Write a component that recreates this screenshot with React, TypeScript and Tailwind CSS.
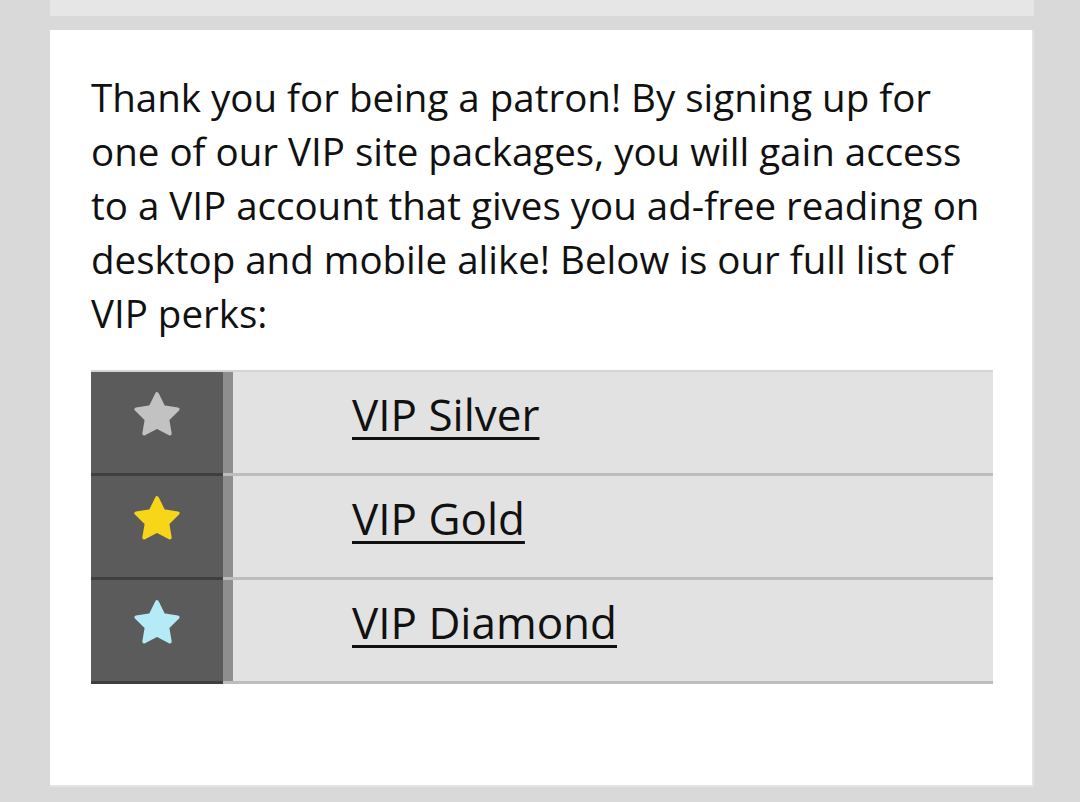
const tiers = [
  { name: "VIP Silver", color: "#c2c2c2" },
  { name: "VIP Gold", color: "#f7d518" },
  { name: "VIP Diamond", color: "#b5eaf7" },
];

function Star({ color }: { color: string }) {
  return (
    <svg width="56" height="56" viewBox="0 0 24 24">
      <path
        d="M12 2.6l2.75 5.6 6.15.9-4.45 4.35 1.05 6.1L12 16.65 6.5 19.55l1.05-6.1L3.1 9.1l6.15-.9z"
        fill={color}
        stroke={color}
        strokeWidth="1.6"
        strokeLinejoin="round"
      />
    </svg>
  );
}

export default function App() {
  return (
    <div className="min-h-[802px] bg-[#d9d9d9] px-[50px] font-['Open_Sans',sans-serif] text-black">
      <div className="h-[16px] w-[984px] bg-[#e6e6e6]"></div>
      <div className="mt-[14px] w-[984px] h-[757px] bg-white border-r-2 border-b-2 border-[#e4e4e4] px-[41px] pt-[40px]">
        <p className="text-[38.5px] leading-[54px] text-[#111]">
          Thank you for being a patron! By signing up for one of our VIP site packages, you will gain access to a VIP
          account that gives you ad-free reading on desktop and mobile alike! Below is our full list of VIP perks:
        </p>
        <div className="mt-[30px] w-[902px] border-t-2 border-[#d4d4d4]">
          {tiers.map((t) => (
            <div key={t.name} className="flex h-[104px] border-b-[3px] border-[#bdbdbd]">
              <div className="w-[132px] bg-[#5b5b5b] flex items-center justify-center pb-[14px] border-b-[3px] border-[#3f3f3f] -mb-[3px]">
                <Star color={t.color} />
              </div>
              <div className="w-[10px] bg-[#8e8e8e]"></div>
              <div className="flex-1 bg-[#e2e2e2] flex items-center pl-[119px] pb-[18px]">
                <a href="#" className="text-[44px] text-[#111] underline decoration-[3px] underline-offset-[6px]">
                  {t.name}
                </a>
              </div>
            </div>
          ))}
        </div>
      </div>
    </div>
  );
}
